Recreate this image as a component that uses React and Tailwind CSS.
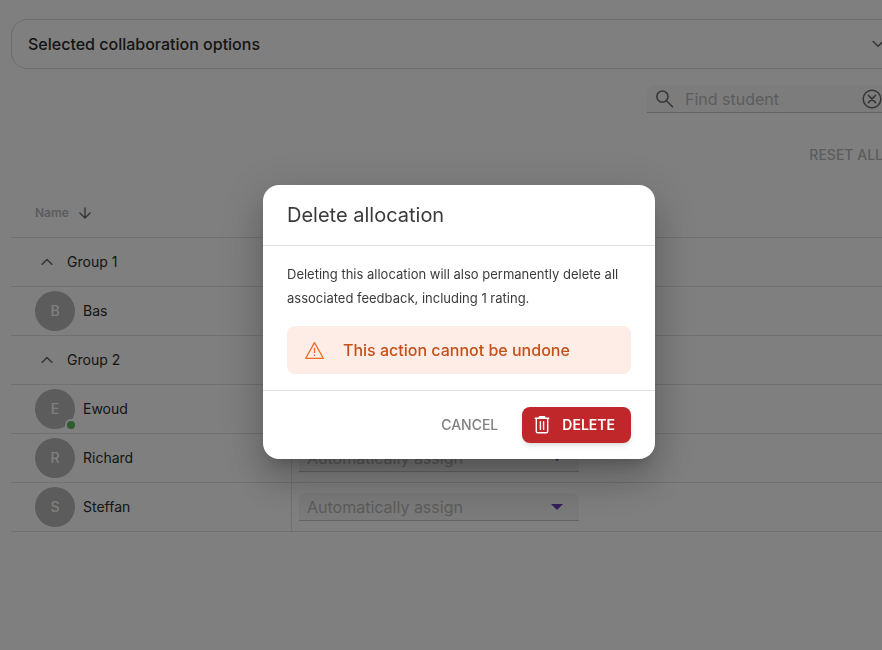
const GROUPS = [
  { name: "Group 1", students: [{ name: "Bas", online: false }] },
  {
    name: "Group 2",
    students: [
      { name: "Ewoud", online: true },
      { name: "Richard", online: false },
      { name: "Steffan", online: false },
    ],
  },
];

function Chevron({ up = false, className = "" }) {
  return (
    <svg viewBox="0 0 24 24" fill="none" stroke="currentColor" strokeWidth="1.6" strokeLinecap="round"
      strokeLinejoin="round" className={`size-6 ${className}`} aria-hidden="true">
      <path d={up ? "M7.2 14.3l4.8-4.8 4.8 4.8" : "M7.2 9.5l4.8 4.8 4.8-4.8"} />
    </svg>
  );
}

function SearchIcon() {
  return (
    <svg viewBox="0 0 24 24" fill="none" stroke="currentColor" strokeWidth="1.5" strokeLinecap="round"
      className="size-6 shrink-0 text-[#6b6b6b]" aria-hidden="true">
      <circle cx="9.4" cy="9.6" r="5.6" />
      <path d="M13.5 13.7l6 6" />
    </svg>
  );
}

function ClearIcon() {
  return (
    <svg viewBox="0 0 24 24" fill="none" stroke="currentColor" strokeWidth="1.5" strokeLinecap="round"
      className="size-6" aria-hidden="true">
      <circle cx="12" cy="12" r="8.8" />
      <path d="M8.4 8.4l7.2 7.2M15.6 8.4l-7.2 7.2" />
    </svg>
  );
}

function SortArrow() {
  return (
    <svg viewBox="0 0 24 24" fill="none" stroke="currentColor" strokeWidth="1.4" strokeLinecap="round"
      strokeLinejoin="round" className="size-6 text-[#6b6b6b]" aria-hidden="true">
      <path d="M12 7v10M6.9 12l5.1 5.1 5.1-5.1" />
    </svg>
  );
}

function WarningIcon() {
  return (
    <svg viewBox="0 0 24 24" fill="none" stroke="currentColor" strokeWidth="1.3" strokeLinejoin="round"
      className="size-6 shrink-0 text-[#f26a21]" aria-hidden="true">
      <path d="M11.5 4.6l8.8 15.7H2.7z" />
      <path d="M11.5 10v5M11.5 16.6v1.5" />
    </svg>
  );
}

function TrashIcon() {
  return (
    <svg viewBox="0 0 24 24" fill="none" stroke="currentColor" strokeWidth="1.4" strokeLinejoin="round"
      strokeLinecap="round" className="size-6 shrink-0" aria-hidden="true">
      <path d="M5.2 5.2h13.6M9.4 5V3.7h5.2V5" />
      <path d="M6.3 5.5v13c0 .8.5 1.3 1.3 1.3h8.8c.8 0 1.3-.5 1.3-1.3v-13" />
      <path d="M10.4 8.6v7.8M13.6 8.6v7.8" />
    </svg>
  );
}

function Avatar({ name, online }) {
  return (
    <span className="relative flex size-10 items-center justify-center rounded-full bg-[#b8b8b8] text-sm font-medium text-white">
      {name[0]}
      {online && (
        <span className="absolute -right-0.5 -bottom-0.5 size-3 rounded-full border-2 border-white bg-[#5cb860]" />
      )}
    </span>
  );
}

function StudentRow({ student }) {
  return (
    <tr>
      <td className="h-[49px] w-[280px] border-b border-[#e2e2e2] pl-6">
        <div className="flex items-center gap-2">
          <Avatar name={student.name} online={student.online} />
          {student.name}
        </div>
      </td>
      <td className="border-b border-l border-[#e2e2e2] pl-[7px]">
        <div className="relative w-[280px]">
          <select aria-label={`Group for ${student.name}`}
            className="block h-7 w-full appearance-none rounded-t-lg border-b border-[#c4c4c4] bg-[#f5f5f5] px-2 text-base leading-6 text-[#b8b8b8]">
            <option>Automatically assign</option>
          </select>
          <svg viewBox="0 0 12 6" className="pointer-events-none absolute top-[11px] right-4 h-1.5 w-3 text-[#673ab7]" aria-hidden="true">
            <path d="M0 0h12L6 6z" fill="currentColor" />
          </svg>
        </div>
      </td>
    </tr>
  );
}

function DeleteDialog() {
  return (
    <div className="fixed inset-y-0 left-0 -right-9 flex items-center justify-center bg-black/50 pb-1.5">
      <div role="dialog" aria-modal="true" aria-labelledby="dialog-title"
        className="w-[392px] rounded-2xl bg-white text-[#3b3b3b] shadow-[0_11px_15px_-7px_rgba(0,0,0,0.2),0_24px_38px_3px_rgba(0,0,0,0.14),0_9px_46px_8px_rgba(0,0,0,0.12)]">
        <h2 id="dialog-title" className="border-b border-[#e0e0e0] px-6 py-4 text-xl leading-7">Delete allocation</h2>

        <div className="px-6 py-4">
          <p className="text-[13px] leading-6">
            Deleting this allocation will also permanently delete all associated feedback, including 1 rating.
          </p>
          <div className="mt-4 flex h-12 items-center gap-4 rounded-lg bg-[#fdede6] px-4 text-base font-medium text-[#c4501b]">
            <WarningIcon />
            This action cannot be undone
          </div>
        </div>

        <div className="flex justify-end gap-2 border-t border-[#e0e0e0] px-6 py-4 text-sm">
          <button type="button" className="h-9 rounded-lg px-4 font-medium text-[#808080]">CANCEL</button>
          <button type="button"
            className="flex h-9 items-center gap-2 rounded-lg bg-[#bf272b] pr-4 pl-2 font-semibold text-white shadow-md">
            <TrashIcon />
            DELETE
          </button>
        </div>
      </div>
    </div>
  );
}

export default function App() {
  return (
    <div className="min-h-screen overflow-hidden bg-white font-['Inter',sans-serif] text-sm text-[#2b2b2b]">
      {/* The page is a little wider than the window, so its right edge is cut off */}
      <main className="-mr-9 px-[11px] pt-[19px]">
        <button type="button"
          className="flex h-[50px] w-full items-center justify-between rounded-2xl border border-[#dcdcdc] px-4 text-base font-medium">
          Selected collaboration options
          <Chevron className="text-[#6b6b6b]" />
        </button>

        <div className="mt-4 flex justify-end">
          <div className="flex h-7 w-[260px] items-center gap-2 rounded-t-lg border-b border-[#c4c4c4] bg-[#f9f9f9] pr-[23px] pl-1.5">
            <SearchIcon />
            <input type="text" aria-label="Find student" placeholder="Find student"
              className="min-w-0 flex-1 text-base leading-6 outline-none placeholder:text-[#b8b8b8]" />
            <button type="button" aria-label="Clear search" className="text-[#6b6b6b]"><ClearIcon /></button>
          </div>
        </div>

        <div className="mt-6 flex justify-end">
          <button type="button" className="h-9 px-6 font-medium text-[#b8b8b8]">RESET ALL</button>
        </div>

        <table className="mt-4 w-full border-separate border-spacing-0">
          <thead>
            <tr>
              <th colSpan={2} className="h-[49px] border-b border-[#e2e2e2] pl-6 text-left">
                <button type="button" className="flex items-center gap-1 text-xs font-semibold text-[#b8b8b8]">
                  Name
                  <SortArrow />
                </button>
              </th>
            </tr>
          </thead>
          {GROUPS.map((group) => (
            <tbody key={group.name}>
              <tr>
                <td colSpan={2} className="h-[49px] border-b border-[#e2e2e2] pl-6">
                  <button type="button" className="flex items-center gap-2">
                    <Chevron up className="text-[#6b6b6b]" />
                    {group.name}
                  </button>
                </td>
              </tr>
              {group.students.map((student) => (
                <StudentRow key={student.name} student={student} />
              ))}
            </tbody>
          ))}
        </table>
      </main>

      <DeleteDialog />
    </div>
  );
}
